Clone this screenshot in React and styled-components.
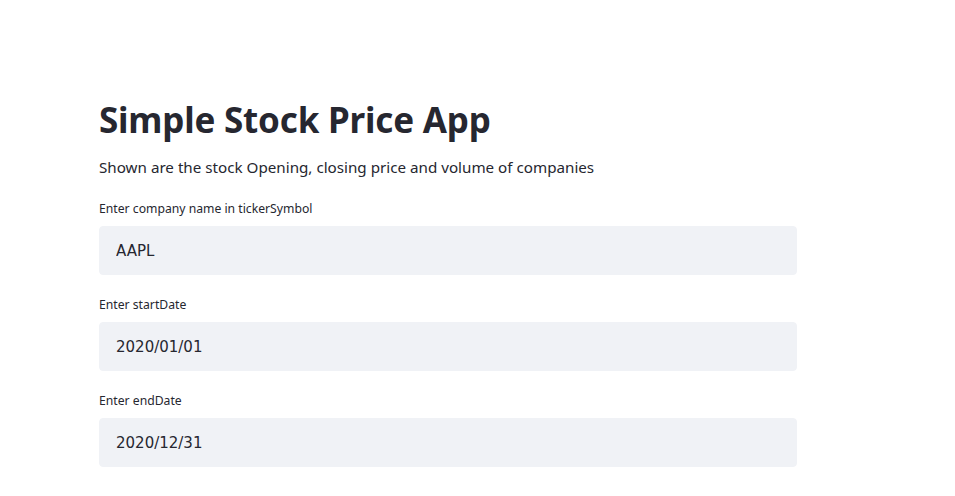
import React from 'react';
import styled, {createGlobalStyle} from 'styled-components';

const FIELDS = [
  {label: 'Enter company name in tickerSymbol', value: 'AAPL'},
  {label: 'Enter startDate', value: '2020/01/01'},
  {label: 'Enter endDate', value: '2020/12/31'},
];

const GlobalStyle = createGlobalStyle`
  body {
    margin: 0;
    background: #ffffff;
    color: #262730;
    font-family: "Noto Sans", "Open Sans", sans-serif;
  }
`;

const App = () => {
  return (
    <>
      <GlobalStyle />
      <ScMain>
        <ScTitle>Simple Stock Price App</ScTitle>
        <ScLead>Shown are the stock Opening, closing price and volume of companies</ScLead>
        {FIELDS.map((field) => (
          <ScField key={field.label}>
            <ScLabel>{field.label}</ScLabel>
            <ScInput type="text" defaultValue={field.value} />
          </ScField>
        ))}
      </ScMain>
    </>
  );
};

export default App;

const ScMain = styled.main`
  width: 698px;
  margin-left: 99px;
  padding-top: 96px;
  display: flex;
  flex-direction: column;
`;

const ScTitle = styled.h1`
  margin: 0;
  font-size: 35px;
  font-weight: 700;
  line-height: 48px;
  letter-spacing: -0.2px;
`;

const ScLead = styled.p`
  margin: 11px 0 0;
  font-size: 15.2px;
  line-height: 24px;
`;

const ScField = styled.div`
  margin-top: 21px;
  display: flex;
  flex-direction: column;
`;

const ScLabel = styled.label`
  font-size: 12.2px;
  line-height: 18px;
  margin-bottom: 8px;
`;

const ScInput = styled.input`
  box-sizing: border-box;
  width: 100%;
  height: 49px;
  padding: 0 16px;
  border: 1px solid #f0f2f6;
  border-radius: 4px;
  background: #f0f2f6;
  color: #262730;
  font-family: "DejaVu Sans", sans-serif;
  font-size: 15px;
  outline: none;
`;
